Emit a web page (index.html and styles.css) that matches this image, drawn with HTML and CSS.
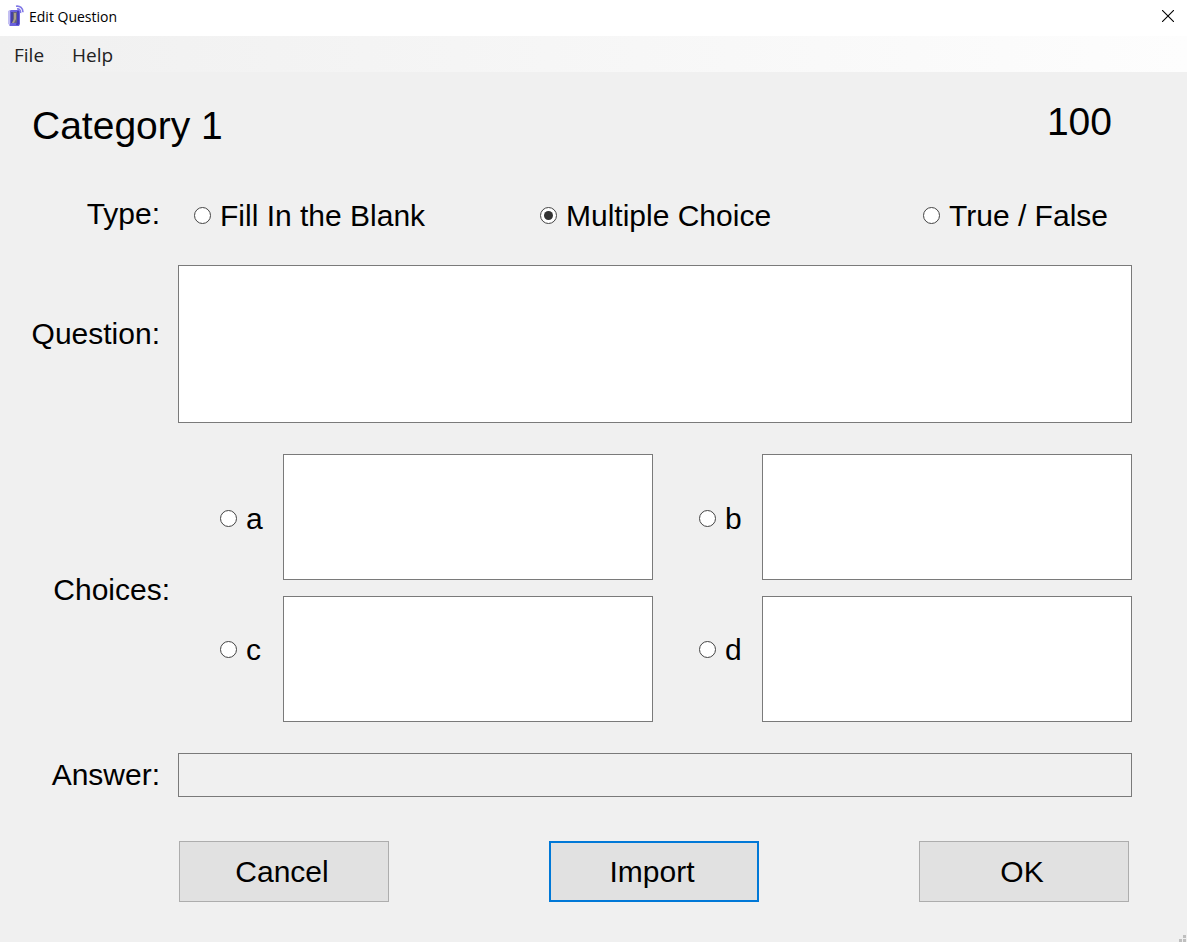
FILE: index.html
```html
<!DOCTYPE html>
<html lang="en">
<head>
<meta charset="utf-8">
<title>Edit Question</title>
<link rel="stylesheet" href="styles.css">
</head>
<body>
<div class="window">
  <header class="titlebar">
    <svg class="app-icon" viewBox="0 0 16 22" aria-hidden="true">
      <path d="M1 6l2-1h8l1 1v13l-1 2H2l-1-1z" fill="#6a61dc"/>
      <path d="M0 6l2-1v15l-2-1z" fill="#c4c0f2"/>
      <path d="M3 7h6v11H4l-1-1z" fill="#68647c"/>
      <path d="M3 7h2v9l-1 2H3z" fill="#4540a0"/>
      <path d="M6 8h2v6l-2 4H4l2-4z" fill="#a89e8c"/>
      <path d="M9 6h2v13l-1 1H8l1-4z" fill="#453cb8"/>
      <path d="M8 1.200c4-.7 7 2 7 6M9 4c2-.4 4 1 3.500 4" fill="none" stroke="#8078e6" stroke-width="1.600"/>
    </svg>
    <h1 class="title">Edit Question</h1>
    <button class="close" type="button" aria-label="Close">
      <svg class="close-icon" viewBox="0 0 12 12" aria-hidden="true"><path d="M0 0l12 12M12 0L0 12" stroke="#000" stroke-width="1.1"/></svg>
    </button>
  </header>
  <nav class="menubar">
    <button class="menu" type="button">File</button>
    <button class="menu" type="button">Help</button>
  </nav>
  <form class="form">
    <div class="heading">
      <h2 class="category">Category 1</h2>
      <span class="points">100</span>
    </div>

    <div class="row type-row" role="radiogroup" aria-labelledby="type-label">
      <span class="label type-label" id="type-label">Type:</span>
      <div class="types">
        <label class="option"><input class="radio" type="radio" name="type">Fill In the Blank</label>
        <label class="option"><input class="radio" type="radio" name="type" checked>Multiple Choice</label>
        <label class="option"><input class="radio" type="radio" name="type">True / False</label>
      </div>
    </div>

    <div class="row question-row">
      <label class="label question-label" for="question">Question:</label>
      <textarea class="field question" id="question"></textarea>
    </div>

    <div class="row choices-row" role="radiogroup" aria-labelledby="choices-label">
      <span class="label choices-label" id="choices-label">Choices:</span>
      <div class="choices">
        <label class="option choice upper"><input class="radio" type="radio" name="choice">a</label>
        <textarea class="field choice-text" aria-label="Choice a"></textarea>
        <label class="option choice right upper"><input class="radio" type="radio" name="choice">b</label>
        <textarea class="field choice-text" aria-label="Choice b"></textarea>
        <label class="option choice lower"><input class="radio" type="radio" name="choice">c</label>
        <textarea class="field choice-text" aria-label="Choice c"></textarea>
        <label class="option choice right lower"><input class="radio" type="radio" name="choice">d</label>
        <textarea class="field choice-text" aria-label="Choice d"></textarea>
      </div>
    </div>

    <div class="row answer-row">
      <label class="label" for="answer">Answer:</label>
      <input class="field answer" id="answer" type="text" readonly>
    </div>

    <div class="buttons">
      <button class="button" type="button">Cancel</button>
      <button class="button default" type="button">Import</button>
      <button class="button" type="button">OK</button>
    </div>
  </form>
  <svg class="grip" viewBox="0 0 8 8" aria-hidden="true"><path d="M5 1h3v3H5zM1 5h3v3H1zM5 5h3v3H5z" fill="#bfbfbf"/></svg>
</div>
</body>
</html>
```

FILE: styles.css
```css
* {
  box-sizing: border-box;
}

body {
  margin: 0;
  background: #f0f0f0;
  color: #000;
  font-family: "Liberation Sans", Arial, sans-serif;
  font-size: 30px;
  line-height: 34px;
}

button,
input,
textarea {
  margin: 0;
  color: inherit;
  font: inherit;
}

.window {
  position: relative;
  min-height: 100vh;
}

.titlebar {
  display: flex;
  align-items: center;
  height: 36px;
  padding: 0 13px 4px 8px;
  background: #fff;
}

.app-icon {
  width: 16px;
  height: 22px;
}

.title {
  flex: 1;
  margin: 0 0 0 5px;
  padding-top: 2px;
  font: 14px/20px "Open Sans", sans-serif;
}

.close {
  display: flex;
  padding: 0;
  border: 0;
  background: none;
}

.close-icon {
  width: 12px;
  height: 12px;
}

.menubar {
  display: flex;
  gap: 28px;
  height: 36px;
  padding: 0 14px;
  background: linear-gradient(90deg, #f0f0f0, #fdfdfd);
}

.menu {
  padding: 2px 0 0;
  border: 0;
  background: none;
  color: #222;
  font: 19px/34px "Open Sans", sans-serif;
}

.form {
  padding: 28px 55px 40px 0;
}

.heading {
  display: flex;
  justify-content: space-between;
  padding: 0 20px 0 32px;
  font-size: 39px;
  line-height: 44px;
}

.category {
  margin: 4px 0 0;
  font: inherit;
}

.row {
  display: grid;
  grid-template-columns: 178px 1fr;
  align-items: center;
}

.label {
  padding-right: 18px;
  text-align: right;
}

.type-row {
  margin-top: 49px;
}

.type-label {
  padding-bottom: 4px;
}

.types {
  display: grid;
  grid-template-columns: 345fr 382fr auto;
  padding: 0 24px 0 16px;
}

.option {
  display: flex;
  align-items: center;
  gap: 9px;
  white-space: nowrap;
}

.radio {
  display: grid;
  place-items: center;
  flex: none;
  width: 17px;
  height: 17px;
  margin-bottom: 2px;
  border: 1px solid #444;
  border-radius: 50%;
  background: #fff;
  appearance: none;
}

.radio:checked::before {
  width: 9px;
  height: 9px;
  border-radius: 50%;
  background: #333;
  content: "";
}

.field {
  display: block;
  width: 100%;
  padding: 4px;
  border: 1px solid #7a7a7a;
  border-radius: 0;
  background: #fff;
  resize: none;
}

.question-row {
  margin-top: 30px;
}

.question-label {
  padding-bottom: 20px;
}

.question {
  height: 158px;
}

.choices-row {
  margin-top: 31px;
}

.choices-label {
  padding-top: 4px;
  padding-right: 8px;
}

.choices {
  display: grid;
  grid-template-columns: 105px 1fr 109px 1fr;
  row-gap: 16px;
}

.choice {
  padding-left: 42px;
}

.right {
  padding-left: 46px;
}

.upper {
  padding-top: 4px;
}

.lower {
  padding-bottom: 18px;
}

.choice-text {
  height: 126px;
}

.answer-row {
  margin-top: 31px;
}

.answer {
  height: 44px;
  background: #f0f0f0;
}

.buttons {
  display: flex;
  justify-content: space-between;
  margin-top: 44px;
  padding: 0 3px 0 179px;
}

.button {
  width: 210px;
  height: 61px;
  padding: 0 4px 0 0;
  border: 1px solid #adadad;
  background: #e1e1e1;
}

.default {
  border: 2px solid #0078d7;
}

.grip {
  position: absolute;
  right: 1px;
  bottom: 0;
  width: 8px;
  height: 8px;
}
```
